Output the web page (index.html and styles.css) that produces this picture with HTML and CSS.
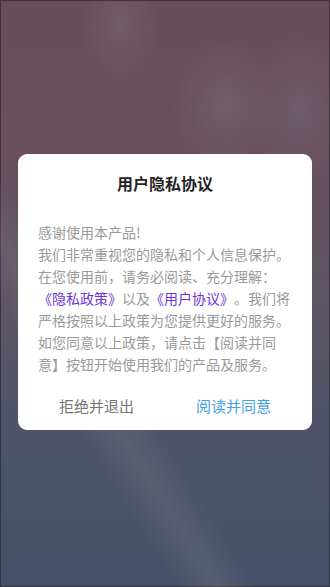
FILE: index.html
```html
<!DOCTYPE html>
<html lang="zh-CN">
<head>
<meta charset="utf-8">
<title>用户隐私协议</title>
<link rel="stylesheet" href="styles.css">
</head>
<body>
<div class="screen">
  <div class="streak"></div>
  <div class="dialog">
    <h1 class="title">用户隐私协议</h1>
    <p class="content">感谢使用本产品!<br>我们非常重视您的隐私和个人信息保护。在您使用前，请务必阅读、充分理解：<a class="link">《隐私政策》</a>以及<a class="link">《用户协议》</a>。我们将严格按照以上政策为您提供更好的服务。如您同意以上政策，请点击【阅读并同意】按钮开始使用我们的产品及服务。</p>
    <div class="actions">
      <button class="btn btn-reject">拒绝并退出</button>
      <button class="btn btn-accept">阅读并同意</button>
    </div>
  </div>
</div>
</body>
</html>
```

FILE: styles.css
```css
html, body {
  margin: 0;
  padding: 0;
}
body {
  width: 330px;
  height: 587px;
  overflow: hidden;
  font-family: "Noto Sans CJK SC", "Noto Sans", sans-serif;
}
.screen {
  position: relative;
  width: 330px;
  height: 587px;
  box-sizing: border-box;
  padding: 154px 18px 0;
  overflow: hidden;
  background:
    radial-gradient(ellipse 40px 60px at 120px 25px, rgba(120,110,118,0.45), rgba(120,110,118,0) 100%),
    radial-gradient(ellipse 55px 65px at 225px 105px, rgba(118,110,120,0.5), rgba(118,110,120,0) 100%),
    radial-gradient(ellipse 55px 75px at 300px 110px, rgba(116,110,122,0.45), rgba(116,110,122,0) 100%),
    linear-gradient(180deg, #6b4c59 0%, #684f5b 25%, #5e5464 50%, #4f5469 72%, #46506a 100%);
  box-shadow: inset 0 0 0 1px rgba(40,40,48,0.7);
}
.streak {
  position: absolute;
  left: -185px;
  top: 0;
  width: 70px;
  height: 760px;
  background: linear-gradient(90deg, rgba(125,122,130,0) 0%, rgba(125,122,130,0.3) 50%, rgba(125,122,130,0) 100%);
  transform: rotate(-32deg);
  transform-origin: 50% 0;
  pointer-events: none;
}
.dialog {
  position: relative;
  width: 294px;
  box-sizing: border-box;
  background: #ffffff;
  border-radius: 9px;
  padding: 18px 0 3px;
}
.title {
  margin: 0;
  font-size: 16px;
  line-height: 22px;
  font-weight: 700;
  color: #252525;
  text-align: center;
}
.content {
  margin: 27px 20px 0;
  font-size: 14px;
  line-height: 22px;
  color: #9a9a9a;
  line-break: strict;
  text-spacing-trim: space-all;
  font-feature-settings: normal;
}
.link {
  color: #6d33d9;
  text-decoration: none;
}
.actions {
  display: flex;
  padding: 10px 10px 0;
}
.btn {
  flex: 1;
  border: 0;
  background: none;
  padding: 10px 0;
  font-family: inherit;
  font-size: 15px;
  line-height: 22px;
}
.btn-reject {
  color: #757575;
}
.btn-accept {
  color: #45a1e6;
}
```
